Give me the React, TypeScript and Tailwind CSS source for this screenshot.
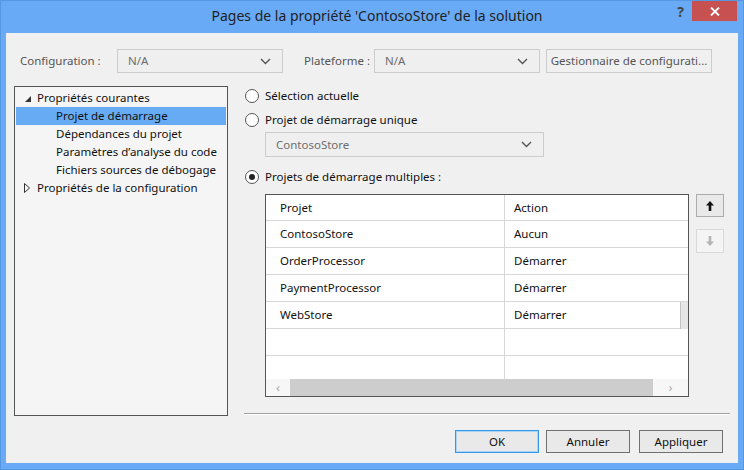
import React from 'react';

const font = { fontFamily: '"Segoe UI", "Noto Sans", "Liberation Sans", sans-serif' };

const treeChildren = [
  "Projet de démarrage",
  "Dépendances du projet",
  "Paramètres d’analyse du code",
  "Fichiers sources de débogage",
];

const rows = [
  { name: "ContosoStore", action: "Aucun" },
  { name: "OrderProcessor", action: "Démarrer" },
  { name: "PaymentProcessor", action: "Démarrer" },
  { name: "WebStore", action: "Démarrer" },
  { name: "", action: "" },
];

function Chevron({ className = "" }: { className?: string }) {
  return (
    <svg width="11" height="7" viewBox="0 0 11 7" className={className}>
      <path d="M1 1 L5.5 5.5 L10 1" fill="none" stroke="#555" strokeWidth="1.4" />
    </svg>
  );
}

function Combo({ value, width }: { value: string; width: string }) {
  return (
    <div className={`${width} h-[24px] border border-[#cccccc] bg-[#efefef] flex items-center justify-between pl-[10px] pr-[11px] text-[#6d6d6d]`}>
      <span>{value}</span>
      <Chevron />
    </div>
  );
}

function Radio({ checked }: { checked?: boolean }) {
  return (
    <div className="w-[14px] h-[14px] rounded-full border border-[#555] bg-white flex items-center justify-center">
      {checked && <div className="w-[6px] h-[6px] rounded-full bg-[#222]" />}
    </div>
  );
}

function Button({ label, primary }: { label: string; primary?: boolean }) {
  return (
    <div
      className={`w-[84px] h-[23px] flex items-center justify-center bg-[#e9e9e9] text-[#111] ${
        primary ? 'border border-[#3399e6] outline outline-1 outline-[#a8d4f5] -outline-offset-2' : 'border border-[#707070]'
      }`}
    >
      {label}
    </div>
  );
}

export default function App() {
  return (
    <div className="w-[744px] h-[470px] bg-[#68aaf5] border border-[#5598e2] flex flex-col text-[11.5px] leading-none" style={font}>
      {/* title bar */}
      <div className="h-[32px] relative flex items-center justify-center pl-[10px]">
        <span className="text-[14px] text-[#222] -mt-[2px]">Pages de la propriété 'ContosoStore' de la solution</span>
        <div className="absolute right-[59px] top-[2px] h-[18px] flex items-center text-[#444] text-[14px] font-bold">?</div>
        <div className="absolute right-[6px] top-0 w-[45px] h-[20px] bg-[#c75050] flex items-center justify-center">
          <svg width="10" height="9" viewBox="0 0 10 9">
            <path d="M1 0.5 L9 8.5 M9 0.5 L1 8.5" stroke="white" strokeWidth="1.8" />
          </svg>
        </div>
      </div>

      {/* client area */}
      <div className="flex-1 mx-[5px] mb-[6px] bg-[#f0f0f0] flex flex-col">
        {/* configuration row */}
        <div className="flex items-center mt-[16px] h-[24px]">
          <span className="w-[111px] pl-[14px] text-[#555]">Configuration :</span>
          <Combo value="N/A" width="w-[166px]" />
          <span className="ml-[21px] w-[70px] text-[#555]">Plateforme :</span>
          <Combo value="N/A" width="w-[166px]" />
          <div className="ml-[6px] w-[166px] h-[24px] border border-[#cccccc] flex items-center justify-center text-[#555]">
            Gestionnaire de configurati...
          </div>
        </div>

        {/* body */}
        <div className="flex mt-[13px] h-[330px]">
          {/* tree */}
          <div className="ml-[8px] w-[214px] h-full border border-[#555] bg-[#f5f5f5] pt-[2px] px-[1px] text-[#111]">
            <div className="h-[18px] flex items-center">
              <svg width="6" height="6" viewBox="0 0 6 6" className="ml-[9px] mt-[1px]">
                <path d="M6 0 L6 6 L0 6 Z" fill="#333" />
              </svg>
              <span className="ml-[6px]">Propriétés courantes</span>
            </div>
            {treeChildren.map((c, i) => (
              <div key={c} className={`h-[18px] flex items-center pl-[40px] ${i === 0 ? 'bg-[#66abf4]' : ''}`}>
                {c}
              </div>
            ))}
            <div className="h-[18px] flex items-center">
              <svg width="6" height="10" viewBox="0 0 6 10" className="ml-[8px]">
                <path d="M0.5 0.5 L5.5 5 L0.5 9.5 Z" fill="none" stroke="#333" />
              </svg>
              <span className="ml-[7px]">Propriétés de la configuration</span>
            </div>
          </div>

          {/* right panel */}
          <div className="ml-[16px] flex-1 flex flex-col text-[#111]">
            <div className="flex items-center h-[14px] mt-[3px] ml-[1px] gap-[6px]">
              <Radio />
              <span>Sélection actuelle</span>
            </div>
            <div className="flex items-center h-[14px] mt-[10px] ml-[1px] gap-[6px]">
              <Radio />
              <span>Projet de démarrage unique</span>
            </div>
            <div className="ml-[21px] mt-[5px]">
              <Combo value="ContosoStore" width="w-[279px] !h-[25px]" />
            </div>
            <div className="flex items-center h-[14px] mt-[13px] ml-[1px] gap-[6px]">
              <Radio checked />
              <span>Projets de démarrage multiples :</span>
            </div>

            <div className="flex mt-[10px] ml-[21px]">
              {/* grid */}
              <div className="relative w-[424px] h-[203px] border border-[#555] bg-white flex flex-col overflow-hidden">
                <div className="h-[26px] flex border-b border-[#d8d8d8] shrink-0">
                  <div className="w-[239px] pl-[14px] flex items-center border-r border-[#d8d8d8]">Projet</div>
                  <div className="flex-1 pl-[9px] flex items-center">Action</div>
                </div>
                {rows.map((r, i) => (
                  <div key={i} className="h-[27px] flex border-b border-[#d8d8d8] shrink-0">
                    <div className="w-[239px] pl-[14px] flex items-center border-r border-[#d8d8d8]">{r.name}</div>
                    <div className="flex-1 pl-[9px] flex items-center">{r.action}</div>
                  </div>
                ))}
                <div className="flex-1 flex">
                  <div className="w-[239px] border-r border-[#d8d8d8]" />
                </div>
                {/* horizontal scrollbar */}
                <div className="h-[17px] shrink-0 flex items-center bg-[#f7f7f7]">
                  <span className="w-[24px] text-center text-[#aaa] text-[13px]">‹</span>
                  <div className="w-[363px] h-full bg-[#cdcdcd]" />
                  <span className="flex-1 text-center text-[#aaa] text-[13px]">›</span>
                </div>
                {/* vertical scroll thumb */}
                <div className="absolute right-0 top-[107px] w-[8px] h-[27px] bg-[#e6e6e6] border-l border-[#c4c4c4]" />
              </div>

              {/* move buttons */}
              <div className="ml-[7px] flex flex-col">
                <div className="w-[28px] h-[23px] border border-[#acacac] bg-[#e9e9e9] flex items-center justify-center">
                  <svg width="8" height="10" viewBox="0 0 8 10">
                    <path d="M4 0 L8 4.5 L5.3 4.5 L5.3 10 L2.7 10 L2.7 4.5 L0 4.5 Z" fill="#111" />
                  </svg>
                </div>
                <div className="mt-[12px] w-[28px] h-[24px] border border-[#d9d9d9] bg-[#f4f4f4] flex items-center justify-center">
                  <svg width="8" height="10" viewBox="0 0 8 10">
                    <path d="M4 10 L8 5.5 L5.3 5.5 L5.3 0 L2.7 0 L2.7 5.5 L0 5.5 Z" fill="#b5b5b5" />
                  </svg>
                </div>
              </div>
            </div>

            <div className="mt-auto mb-[1px] h-[2px] mr-[8px] border-t border-[#a0a0a0] border-b border-b-white" />
          </div>
        </div>

        {/* footer buttons */}
        <div className="flex justify-end gap-[7px] mt-[14px] pr-[15px]">
          <Button label="OK" primary />
          <Button label="Annuler" />
          <div className="ml-[2px]">
            <Button label="Appliquer" />
          </div>
        </div>
      </div>
    </div>
  );
}
